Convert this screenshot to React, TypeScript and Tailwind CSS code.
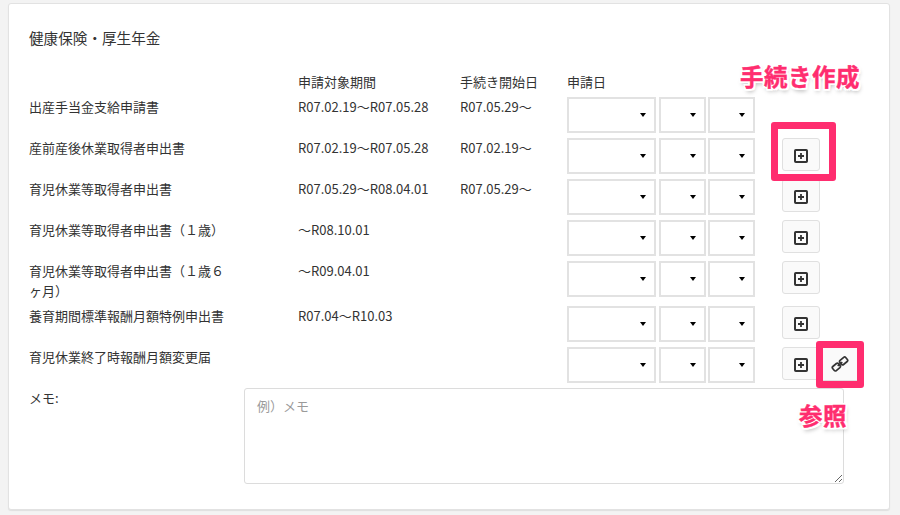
interface RowData {
  name: string;
  period?: string;
  start?: string;
  tall?: boolean;
  noButton?: boolean;
}

const ROWS: RowData[] = [
  { name: '出産手当金支給申請書', period: 'R07.02.19〜R07.05.28', start: 'R07.05.29〜', noButton: true },
  { name: '産前産後休業取得者申出書', period: 'R07.02.19〜R07.05.28', start: 'R07.02.19〜' },
  { name: '育児休業等取得者申出書', period: 'R07.05.29〜R08.04.01', start: 'R07.05.29〜' },
  { name: '育児休業等取得者申出書（１歳）', period: '〜R08.10.01' },
  { name: '育児休業等取得者申出書（１歳６ヶ月）', period: '〜R09.04.01', tall: true },
  { name: '養育期間標準報酬月額特例申出書', period: 'R07.04〜R10.03' },
  { name: '育児休業終了時報酬月額変更届' },
];

const SelectBox = ({ width }: { width: string }) => (
  <div className={`${width} h-[36px] border-2 border-[#e2e2e2] bg-white flex items-center justify-end pr-[8px]`}>
    <span className="w-0 h-0 border-x-[3px] border-x-transparent border-t-[4px] border-t-black" />
  </div>
);

const PlusIcon = () => (
  <svg width="14" height="14" viewBox="0 0 14 14" fill="none" stroke="#333" aria-hidden="true">
    <rect x="1" y="1" width="12" height="12" rx="0.8" strokeWidth="2" />
    <path d="M7 4v6M4 7h6" strokeWidth="1.8" />
  </svg>
);

const LinkIcon = () => (
  <svg width="18" height="18" viewBox="0 0 18 18" fill="none" stroke="#333" strokeWidth="1.7" aria-hidden="true">
    <g transform="rotate(-40 9 9)">
      <rect x="0.5" y="6.3" width="7.5" height="5.4" rx="1.4" />
      <rect x="10" y="6.3" width="7.5" height="5.4" rx="1.4" />
      <path d="M6 9h6" />
    </g>
  </svg>
);

const Row = ({ row }: { row: RowData }) => (
  <div className={`grid grid-cols-[269px_162px_107px_92px_49px_47px_27px_38px] ${row.tall ? 'h-[45px]' : 'h-[41px]'}`}>
    <div className="w-[200px] leading-[20px]">{row.name}</div>
    <div className="leading-[20px]">{row.period}</div>
    <div className="leading-[20px]">{row.start}</div>
    <SelectBox width="w-[89px]" />
    <SelectBox width="w-[47px]" />
    <SelectBox width="w-[47px]" />
    <div />
    <div>
      {!row.noButton && (
        <div className="w-[38px] h-[33px] pt-[2px] rounded-[3px] border border-[#e0e0e0] bg-[#fafafa] flex items-center justify-center">
          <PlusIcon />
        </div>
      )}
    </div>
  </div>
);

const Note = ({ children, className }: { children: string; className: string }) => (
  <div
    className={`absolute text-[#ff2d6f] font-bold tracking-[0.5px] [-webkit-text-stroke:0.4px_#ff2d6f] [text-shadow:-2px_-2px_0_#fff,2px_-2px_0_#fff,-2px_2px_0_#fff,2px_2px_0_#fff,0_2px_0_#fff,2px_0_0_#fff,-2px_0_0_#fff,0_-2px_0_#fff,1px_3px_4px_rgba(0,0,0,0.35)] ${className}`}
  >
    {children}
  </div>
);

export default function App() {
  return (
    <div className="relative w-[900px] h-[515px] overflow-hidden bg-[#f3f3f3] pt-[3px] pl-[8px] text-[#333] text-[13px] font-['Noto_Sans_CJK_JP','Noto_Sans',sans-serif]">
      <div className="w-[882px] h-[507px] rounded-[3px] border border-[#e2e2e2] bg-white pl-[20px] pt-[23px] shadow-[0_1px_1px_rgba(0,0,0,0.08)]">
        <h2 className="text-[14.6px] leading-[22px]">健康保険・厚生年金</h2>

        <div className="grid grid-cols-[269px_162px_107px_1fr] mt-[23px] h-[25px] leading-[18px] pt-[1px]">
          <div />
          <div>申請対象期間</div>
          <div>手続き開始日</div>
          <div>申請日</div>
        </div>

        <div>
          {ROWS.map((row) => (
            <Row key={row.name} row={row} />
          ))}
        </div>

        <div className="flex">
          <div className="w-[215px] leading-[20px]">メモ:</div>
          <textarea
            readOnly
            placeholder="例）メモ"
            className="w-[600px] h-[96px] rounded-[3px] border border-[#dcdcdc] px-[12px] py-[6px] leading-[22px] text-[13px] placeholder:text-[#9a9a9a] outline-none"
          />
        </div>
      </div>

      {/* 注釈 */}
      <div className="absolute left-[771px] top-[122px] w-[65px] h-[59px] rounded-[3px] border-[7px] border-[#ff2d6f]" />
      <div className="absolute left-[816px] top-[341px] w-[48px] h-[47px] rounded-[3px] border-[7px] border-[#ff2d6f]">
        <div className="w-full h-full bg-[#fafafa] border-b border-[#e0e0e0] flex items-center justify-center">
          <LinkIcon />
        </div>
      </div>
      <Note className="left-[740px] top-[59px] text-[23.5px] leading-[34px]">手続き作成</Note>
      <Note className="left-[799px] top-[400px] text-[23.5px] leading-[30px]">参照</Note>
    </div>
  );
}
